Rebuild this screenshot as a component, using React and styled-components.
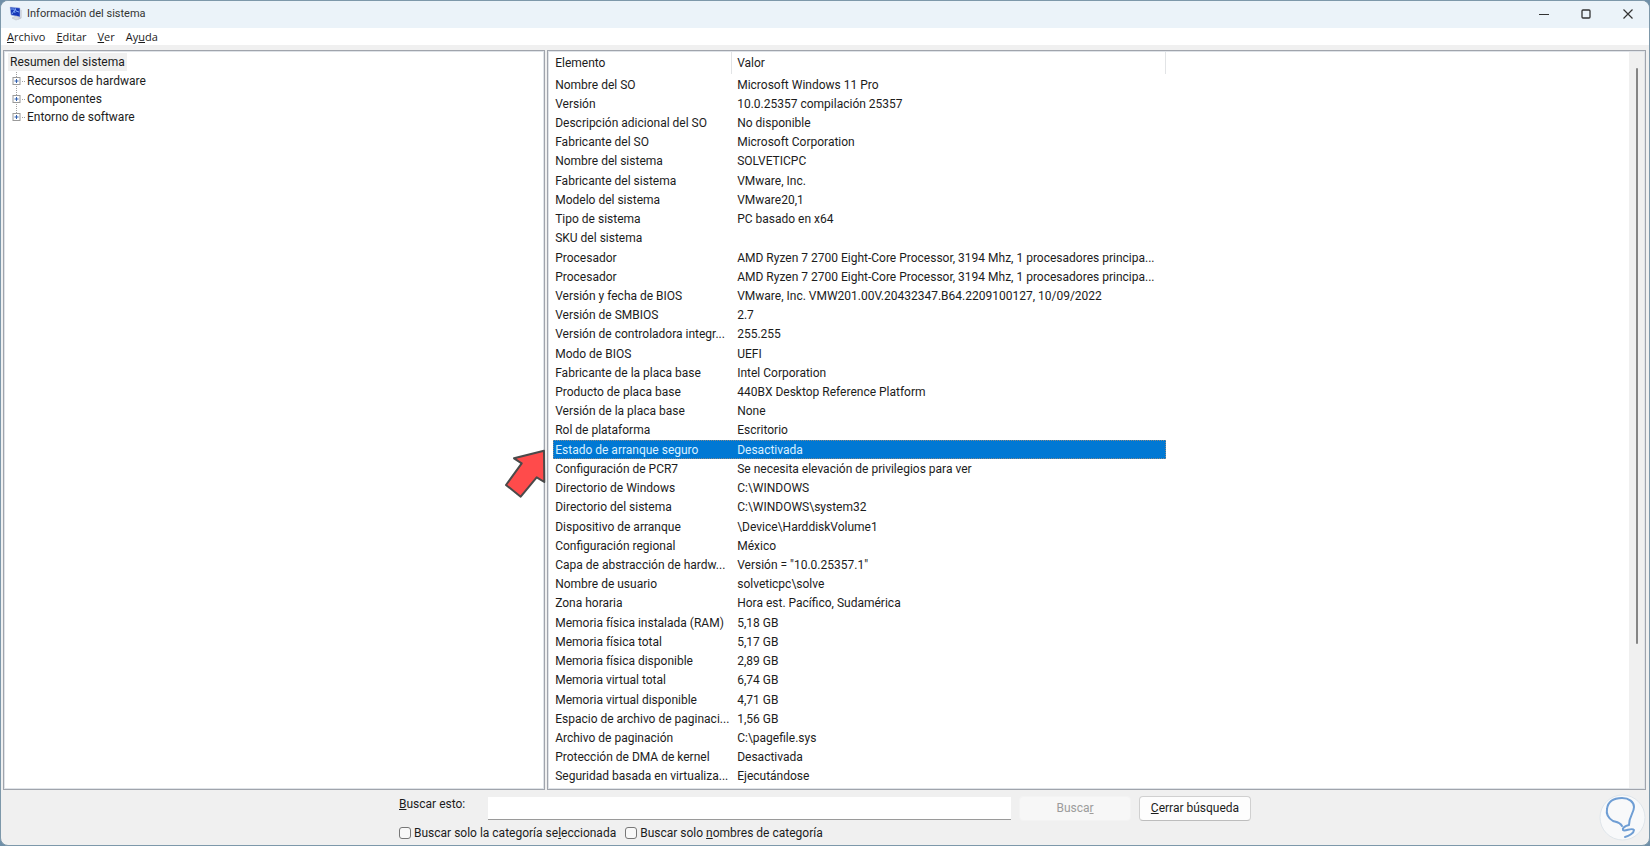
import React, { useState } from "react";
import styled, { createGlobalStyle } from "styled-components";

const GlobalStyle = createGlobalStyle`
  * {
    box-sizing: border-box;
  }

  body {
    margin: 0;
    background: #6f8fa8;
    color: #1c1c1c;
    font-family: Roboto, "Open Sans", sans-serif;
    font-size: 12px;
    line-height: 18px;
  }

  button, input {
    font: inherit;
  }
`;

const Window = styled.div`
  position: relative;
  display: flex;
  flex-direction: column;
  height: 100vh;
  border: 1px solid #7d98aa;
  border-radius: 8px;
  background: #f0f0f0;
  overflow: hidden;
`;

const TitleBar = styled.header`
  display: flex;
  align-items: center;
  height: 27px;
  padding: 0 0 2px 8px;
  background: #ebf3f9;
  color: #333333;
`;

const Title = styled.h1`
  flex: 1;
  margin: 0 0 0 4px;
  font-size: 11px;
  font-weight: 400;
`;

const WindowButton = styled.button`
  display: flex;
  align-items: center;
  justify-content: center;
  width: 42px;
  height: 25px;
  padding: 0;
  border: none;
  background: none;
  color: #333333;
`;

const MenuBar = styled.nav`
  display: flex;
  align-items: center;
  gap: 11px;
  height: 17px;
  padding-left: 6px;
  background: #ffffff;
`;

const MenuItem = styled.button`
  padding: 0;
  border: none;
  background: none;
  color: inherit;
  font-family: "Open Sans", sans-serif;
  font-size: 11px;
  line-height: 17px;
`;

const Panes = styled.main`
  display: flex;
  flex: 1;
  gap: 2px;
  min-height: 0;
  padding: 5px 3px 0 2px;
`;

const Pane = styled.section`
  border: 1px solid #a0a4ac;
  box-shadow: inset 1px 1px 0 #dfe3e8, inset -1px -1px 0 #dfe3e8;
  background: #ffffff;
`;

const TreePane = styled(Pane)`
  flex: 0 0 33%;
  padding: 2px 4px;
`;

const ListPane = styled(Pane)`
  display: flex;
  flex: 1;
  min-width: 0;
  padding: 1px 1px 1px 5px;
`;

const TreeRoot = styled.span`
  display: inline-block;
  padding: 0 2px;
  background: #f0f0f0;
`;

const TreeList = styled.ul`
  margin: 0;
  padding: 1px 0 0 3px;
  list-style: none;
`;

const TreeNode = styled.li`
  display: flex;
  align-items: center;
  gap: 1px;
  height: 18px;
`;

const Expander = styled.button`
  display: flex;
  padding: 0;
  border: none;
  background: none;
`;

const Table = styled.table`
  display: flex;
  flex-direction: column;
  width: 613px;
  padding-bottom: 2px;
`;

const TableHead = styled.thead`
  display: block;
  height: 23px;
`;

const TableBody = styled.tbody`
  display: grid;
  flex: 1;
  grid-auto-rows: minmax(19px, 1fr);
`;

const Row = styled.tr`
  display: grid;
  grid-template-columns: 179px 1fr;
  align-items: center;
  background: ${({ $selected }) => ($selected ? "#0078d4" : "transparent")};
  color: ${({ $selected }) => ($selected ? "#d9f0ff" : "inherit")};
  outline: ${({ $selected }) => ($selected ? "1px dotted #8a8a86" : "none")};
  outline-offset: -1px;
`;

const HeadCell = styled.th`
  height: 22px;
  padding: 3px 0 0 ${({ $first }) => ($first ? "2px" : "5px")};
  border-right: 1px solid #e2e4e6;
  font-weight: 400;
  line-height: 17px;
  text-align: left;
`;

const Cell = styled.td`
  padding: 0 0 0 ${({ $first }) => ($first ? "2px" : "5px")};
  overflow: hidden;
  text-overflow: ellipsis;
  white-space: nowrap;
`;

const ScrollTrack = styled.div`
  width: 15px;
  margin-left: auto;
  padding: 16px 6px 0 7px;
  background: #f0f0f0;
`;

const ScrollThumb = styled.div`
  width: 2px;
  height: 80%;
  border-radius: 1px;
  background: #858585;
`;

const SearchPanel = styled.form`
  display: flex;
  flex-direction: column;
  gap: 3px;
  width: 852px;
  margin: 0 auto;
  padding: 5px 0 3px;
`;

const SearchRow = styled.div`
  display: flex;
  align-items: center;
  gap: 8px;
`;

const SearchLabel = styled.label`
  width: 81px;
  padding-bottom: 8px;
`;

const SearchInput = styled.input`
  flex: 1;
  height: 23px;
  padding: 0 6px;
  border: none;
  border-bottom: 1px solid #9a9a9a;
  background: #ffffff;
`;

const PushButton = styled.button`
  width: 112px;
  height: 25px;
  padding: 0;
  border: 1px solid #d0d0d0;
  border-bottom-color: #bdbdbd;
  border-radius: 4px;
  background: #fdfdfd;
  color: #1c1c1c;

  &:disabled {
    border-color: #f3f3f3;
    background: #f7f7f7;
    color: #9c9c9c;
  }
`;

const OptionsRow = styled.div`
  display: flex;
  gap: 9px;
`;

const CheckLabel = styled.label`
  display: flex;
  align-items: center;
  gap: 3px;
`;

const CheckBox = styled.input`
  width: 12px;
  height: 12px;
  margin: 0;
  border: 1px solid #777777;
  border-radius: 3px;
  background: #f8f8f8;
  appearance: none;

  &:checked {
    background: #0067c0;
  }
`;

const PointerArrow = styled.svg`
  position: absolute;
  top: 446px;
  left: 501px;
`;

const Watermark = styled.svg`
  position: absolute;
  right: 3px;
  bottom: 4px;
`;

const categories = ["Recursos de hardware", "Componentes", "Entorno de software"];

const details = [
  ["Nombre del SO", "Microsoft Windows 11 Pro"],
  ["Versión", "10.0.25357 compilación 25357"],
  ["Descripción adicional del SO", "No disponible"],
  ["Fabricante del SO", "Microsoft Corporation"],
  ["Nombre del sistema", "SOLVETICPC"],
  ["Fabricante del sistema", "VMware, Inc."],
  ["Modelo del sistema", "VMware20,1"],
  ["Tipo de sistema", "PC basado en x64"],
  ["SKU del sistema", ""],
  ["Procesador", "AMD Ryzen 7 2700 Eight-Core Processor, 3194 Mhz, 1 procesadores principa..."],
  ["Procesador", "AMD Ryzen 7 2700 Eight-Core Processor, 3194 Mhz, 1 procesadores principa..."],
  ["Versión y fecha de BIOS", "VMware, Inc. VMW201.00V.20432347.B64.2209100127, 10/09/2022"],
  ["Versión de SMBIOS", "2.7"],
  ["Versión de controladora integr...", "255.255"],
  ["Modo de BIOS", "UEFI"],
  ["Fabricante de la placa base", "Intel Corporation"],
  ["Producto de placa base", "440BX Desktop Reference Platform"],
  ["Versión de la placa base", "None"],
  ["Rol de plataforma", "Escritorio"],
  ["Estado de arranque seguro", "Desactivada"],
  ["Configuración de PCR7", "Se necesita elevación de privilegios para ver"],
  ["Directorio de Windows", "C:\\WINDOWS"],
  ["Directorio del sistema", "C:\\WINDOWS\\system32"],
  ["Dispositivo de arranque", "\\Device\\HarddiskVolume1"],
  ["Configuración regional", "México"],
  ["Capa de abstracción de hardw...", "Versión = \"10.0.25357.1\""],
  ["Nombre de usuario", "solveticpc\\solve"],
  ["Zona horaria", "Hora est. Pacífico, Sudamérica"],
  ["Memoria física instalada (RAM)", "5,18 GB"],
  ["Memoria física total", "5,17 GB"],
  ["Memoria física disponible", "2,89 GB"],
  ["Memoria virtual total", "6,74 GB"],
  ["Memoria virtual disponible", "4,71 GB"],
  ["Espacio de archivo de paginaci...", "1,56 GB"],
  ["Archivo de paginación", "C:\\pagefile.sys"],
  ["Protección de DMA de kernel", "Desactivada"],
  ["Seguridad basada en virtualiza...", "Ejecutándose"],
];

const AppIcon = () => (
  <svg width="14" height="15" viewBox="0 0 14 15">
    <path d="M9 3l4 1v8l-4 2z" fill="#d5d9df" />
    <path d="M1 1l10 1v9L2 9z" fill="#1738b8" stroke="#b7c4e4" strokeWidth="0.5" />
    <path d="M2 3l3 0 1 4M6 2l1 3 3 1M3 8l2-3" fill="none" stroke="#7fa8f4" strokeWidth="1" />
    <path d="M3 12l4-2 5 2-5 2z" fill="#d8dbe0" stroke="#b4bac4" strokeWidth="0.5" />
  </svg>
);

const ExpandIcon = ({ last }) => (
  <svg width="15" height="18" viewBox="0 0 15 18">
    <path d={last ? "M5.5 0v5" : "M5.5 0v18"} stroke="#a0a0a0" strokeDasharray="1 1" />
    <path d="M11 9.5h4" stroke="#a0a0a0" strokeDasharray="1 1" />
    <rect x="2" y="5.5" width="7" height="7" fill="#ffffff" stroke="#9a9a9a" />
    <path d="M3.5 9h4M5.500 7v4" stroke="#2f5fb0" />
  </svg>
);

const App = () => {
  const [query, setQuery] = useState("");
  const [selected, setSelected] = useState(19);

  return (
    <>
      <GlobalStyle />
      <Window>
        <TitleBar>
          <AppIcon />
          <Title>Información del sistema</Title>
          <WindowButton aria-label="Minimizar">
            <svg width="10" height="10"><path d="M0 5.5h10" stroke="currentColor" /></svg>
          </WindowButton>
          <WindowButton aria-label="Maximizar">
            <svg width="10" height="10">
              <rect x="1" y="1" width="8" height="8" rx="1" fill="none" stroke="currentColor" strokeWidth="1.3" />
            </svg>
          </WindowButton>
          <WindowButton aria-label="Cerrar">
            <svg width="10" height="10">
              <path d="M.5.5l9 9M9.5.5l-9 9" stroke="currentColor" strokeWidth="1.2" />
            </svg>
          </WindowButton>
        </TitleBar>

        <MenuBar>
          <MenuItem><u>A</u>rchivo</MenuItem>
          <MenuItem><u>E</u>ditar</MenuItem>
          <MenuItem><u>V</u>er</MenuItem>
          <MenuItem>Ay<u>u</u>da</MenuItem>
        </MenuBar>

        <Panes>
          <TreePane>
            <TreeRoot>Resumen del sistema</TreeRoot>
            <TreeList>
              {categories.map((name, i) => (
                <TreeNode key={name}>
                  <Expander aria-label={name}>
                    <ExpandIcon last={i === categories.length - 1} />
                  </Expander>
                  <span>{name}</span>
                </TreeNode>
              ))}
            </TreeList>
          </TreePane>

          <ListPane>
            <Table>
              <TableHead>
                <Row>
                  <HeadCell $first>Elemento</HeadCell>
                  <HeadCell>Valor</HeadCell>
                </Row>
              </TableHead>
              <TableBody>
                {details.map(([item, value], i) => (
                  <Row key={i} $selected={i === selected} onClick={() => setSelected(i)}>
                    <Cell $first>{item}</Cell>
                    <Cell>{value}</Cell>
                  </Row>
                ))}
              </TableBody>
            </Table>
            <ScrollTrack>
              <ScrollThumb />
            </ScrollTrack>
          </ListPane>
        </Panes>

        <SearchPanel onSubmit={(e) => e.preventDefault()}>
          <SearchRow>
            <SearchLabel htmlFor="search"><u>B</u>uscar esto:</SearchLabel>
            <SearchInput id="search" value={query} onChange={(e) => setQuery(e.target.value)} />
            <PushButton type="submit" disabled={!query}>Busca<u>r</u></PushButton>
            <PushButton type="button"><u>C</u>errar búsqueda</PushButton>
          </SearchRow>
          <OptionsRow>
            <CheckLabel>
              <CheckBox type="checkbox" />
              <span>Buscar solo la categoría se<u>l</u>eccionada</span>
            </CheckLabel>
            <CheckLabel>
              <CheckBox type="checkbox" />
              <span>Buscar solo <u>n</u>ombres de categoría</span>
            </CheckLabel>
          </OptionsRow>
        </SearchPanel>

        <PointerArrow width="46" height="52" viewBox="0 0 46 52">
          <path
            d="M42 3.700L12 11.300L19.700 16.300L4 38L18.700 49.700L34.700 30.300L42.300 35Z"
            fill="#ff4b4b"
            stroke="#4a4a4a"
            strokeWidth="2"
            strokeLinejoin="round"
          />
        </PointerArrow>

        <Watermark width="47" height="47" viewBox="0 0 47 47">
          <circle cx="23.500" cy="23.500" r="22.500" fill="#f8f9fa" stroke="#dfe5ea" />
          <path
            d="M23 32C21 28 18 28 14 27C9 24 7 20 8 15C9 7 15 4 23 4C30 4 35 8 35 13C35 19 30 22 30 31C26 32 23 34 24 36C26 38 33 33 35 36C35 39 30 42 26 43"
            fill="none"
            stroke="#6f9ed4"
            strokeWidth="2"
            strokeLinecap="round"
            strokeLinejoin="round"
          />
        </Watermark>
      </Window>
    </>
  );
};

export default App;
